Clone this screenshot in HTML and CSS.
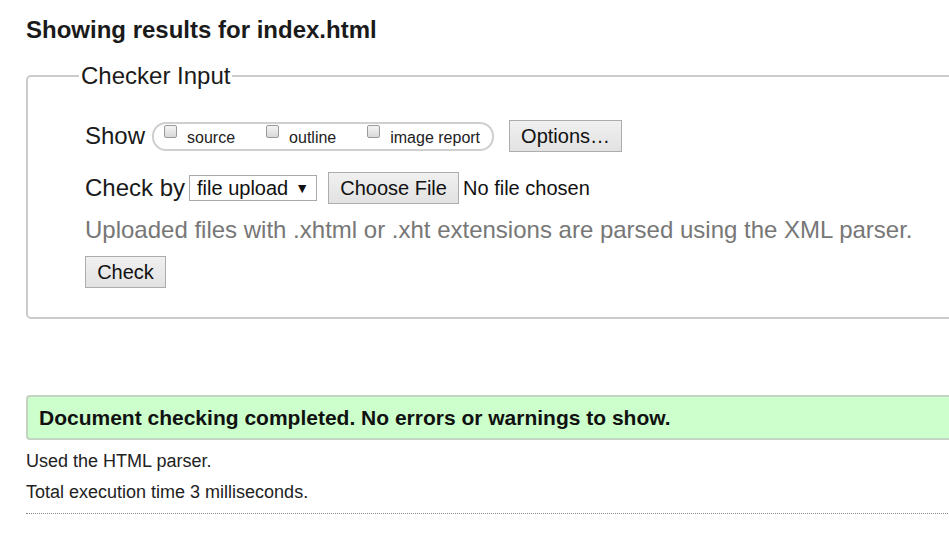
FILE: index.html
```html
<!DOCTYPE html>
<html>
<head>
<meta charset="utf-8">
<link rel="stylesheet" href="styles.css">
</head>
<body>
<div class="page">
  <h2 class="title">Showing results for index.html</h2>
  <fieldset class="checker">
    <legend class="legend">Checker Input</legend>
    <div class="row row-show">
      <span class="label">Show</span>
      <span class="pill">
        <label class="opt"><span class="cb"></span><span class="opt-text">source</span></label>
        <label class="opt"><span class="cb"></span><span class="opt-text">outline</span></label>
        <label class="opt"><span class="cb"></span><span class="opt-text">image report</span></label>
      </span>
      <span class="btn btn-options">Options…</span>
    </div>
    <div class="row row-check">
      <span class="label">Check by</span>
      <span class="select">file upload <span class="arrow">▼</span></span>
      <span class="btn btn-file">Choose File</span>
      <span class="nofile">No file chosen</span>
    </div>
    <p class="hint">Uploaded files with .xhtml or .xht extensions are parsed using the XML parser.</p>
    <div class="row"><span class="btn btn-check">Check</span></div>
  </fieldset>
  <div class="success">Document checking completed. No errors or warnings to show.</div>
  <p class="meta meta-first">Used the HTML parser.</p>
  <p class="meta">Total execution time 3 milliseconds.</p>
  <hr class="rule">
</div>
</body>
</html>
```
FILE: styles.css
```css
html, body {
  margin: 0;
  padding: 0;
  overflow: hidden;
  background: #fff;
}
body {
  font-family: "Liberation Sans", Arial, sans-serif;
  color: #1a1a1a;
}
.page {
  width: 1000px;
  padding-left: 26px;
  padding-top: 16px;
}
.title {
  margin: 0;
  font-size: 24px;
  font-weight: bold;
  line-height: 28px;
  color: #1a1a1a;
}
.checker {
  margin: 18px 0 0 0;
  border: 2px solid #cbcbcb;
  border-radius: 5px;
  padding: 30px 0 29px 57px;
  min-width: 0;
}
.legend {
  font-size: 24px;
  margin-left: -6px;
  padding: 0 2px;
  color: #1a1a1a;
}
.row {
  display: flex;
  align-items: center;
}
.label {
  font-size: 24px;
  color: #1a1a1a;
}
.row-show {
  height: 32px;
}
.pill {
  display: inline-flex;
  align-items: flex-start;
  margin-left: 7px;
  height: 25px;
  border: 2px solid #cfcfcf;
  border-radius: 14px;
  padding: 0 12px 0 10px;
}
.opt {
  display: inline-flex;
  align-items: flex-start;
  margin-right: 31px;
}
.opt:last-child {
  margin-right: 0;
}
.opt-text {
  font-size: 16px;
  line-height: 18px;
  padding-top: 5px;
  color: #222;
}
.cb {
  display: inline-block;
  box-sizing: border-box;
  width: 13px;
  height: 13px;
  margin-top: 1px;
  border: 1px solid #9a9a9a;
  border-radius: 2px;
  background: linear-gradient(#f4f4f4, #d8d8d8);
  margin-right: 10px;
}
.btn {
  display: inline-flex;
  align-items: center;
  justify-content: center;
  box-sizing: border-box;
  border: 1px solid #adadad;
  background: linear-gradient(#f0f0f0, #e2e2e2);
  font-size: 20px;
  color: #111;
}
.btn-options {
  margin-left: 15px;
  width: 113px;
  height: 32px;
}
.row-check {
  margin-top: 20px;
  height: 32px;
}
.select {
  display: inline-flex;
  align-items: center;
  box-sizing: border-box;
  margin-left: 4px;
  height: 26px;
  width: 128px;
  border: 1px solid #a9a9a9;
  padding-left: 7px;
  font-size: 20px;
  color: #111;
}
.arrow {
  font-size: 14px;
  margin-left: 7px;
}
.btn-file {
  margin-left: 11px;
  width: 131px;
  height: 32px;
}
.nofile {
  margin-left: 4px;
  font-size: 20px;
  color: #111;
}
.hint {
  margin: 12px 0 12px 0;
  font-size: 24px;
  color: #777;
  line-height: 28px;
}
.btn-check {
  width: 81px;
  height: 32px;
}
.success {
  margin-top: 76px;
  border: 2px solid #c3d4c3;
  border-radius: 4px;
  background: #ccffcc;
  padding: 9px 0 8px 11px;
  font-size: 21px;
  font-weight: bold;
  line-height: 24px;
  color: #111;
}
.meta {
  margin: 0;
  font-size: 18px;
  line-height: 31px;
  color: #222;
}
.meta-first {
  margin-top: 6px;
}
.rule {
  margin: 5px 0 0 0;
  border: none;
  border-top: 1px dotted #888;
  height: 0;
}
```
